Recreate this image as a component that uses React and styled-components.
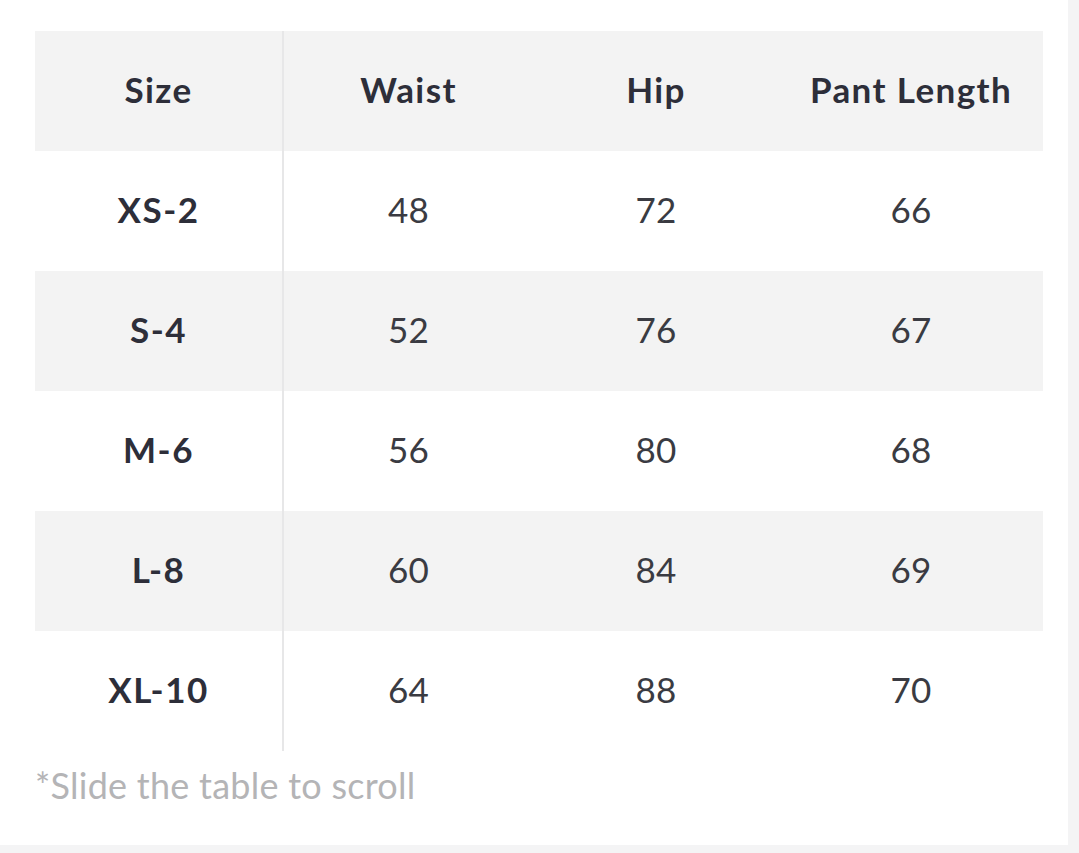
import styled, { createGlobalStyle } from 'styled-components';

const GlobalStyle = createGlobalStyle`
  html, body {
    margin: 0;
    padding: 0;
    background: #f4f4f5;
  }
  body {
    font-family: Lato, "Open Sans", Arial, sans-serif;
  }
`;

const Page = styled.div`
  width: 1068px;
  height: 845px;
  background: #ffffff;
  padding: 31px 0 0 35px;
  box-sizing: border-box;
`;

const Table = styled.table`
  width: 1008px;
  border-collapse: collapse;
  table-layout: fixed;
`;

const Row = styled.tr`
  height: 120px;
  background: ${(p) => (p.$shaded ? '#f3f3f3' : '#ffffff')};
`;

const Cell = styled.td`
  padding: 0 0 4px;
  text-align: center;
  vertical-align: middle;
  font-size: 35px;
  line-height: 1;
  color: ${(p) => (p.$bold ? '#2d2e39' : '#3a3b42')};
  font-weight: ${(p) => (p.$bold ? 700 : 400)};
  letter-spacing: ${(p) => (p.$bold ? '1.5px' : '0.3px')};
  border-right: ${(p) => (p.$divider ? '2px solid #e7e7e8' : 'none')};
`;

const HeadCell = styled(Cell).attrs({ as: 'th' })`
  font-weight: 700;
  color: #2d2e39;
  letter-spacing: 1.4px;
`;

const Note = styled.p`
  margin: 16px 0 0;
  font-size: 36px;
  line-height: 1;
  color: #b4b4b6;
  font-weight: 400;
  letter-spacing: 0.25px;
`;

const rows = [
  ['XS-2', 48, 72, 66],
  ['S-4', 52, 76, 67],
  ['M-6', 56, 80, 68],
  ['L-8', 60, 84, 69],
  ['XL-10', 64, 88, 70],
];

const App = () => (
  <>
    <GlobalStyle />
    <Page>
      <Table>
        <colgroup>
          <col style={{ width: 248 }} />
          <col style={{ width: 250 }} />
          <col style={{ width: 246 }} />
          <col style={{ width: 264 }} />
        </colgroup>
        <thead>
          <Row $shaded>
            <HeadCell $divider>Size</HeadCell>
            <HeadCell>Waist</HeadCell>
            <HeadCell>Hip</HeadCell>
            <HeadCell>Pant Length</HeadCell>
          </Row>
        </thead>
        <tbody>
          {rows.map(([size, waist, hip, length], i) => (
            <Row key={size} $shaded={i % 2 === 1}>
              <Cell $bold $divider>{size}</Cell>
              <Cell>{waist}</Cell>
              <Cell>{hip}</Cell>
              <Cell>{length}</Cell>
            </Row>
          ))}
        </tbody>
      </Table>
      <Note>*Slide the table to scroll</Note>
    </Page>
  </>
);

export default App;
